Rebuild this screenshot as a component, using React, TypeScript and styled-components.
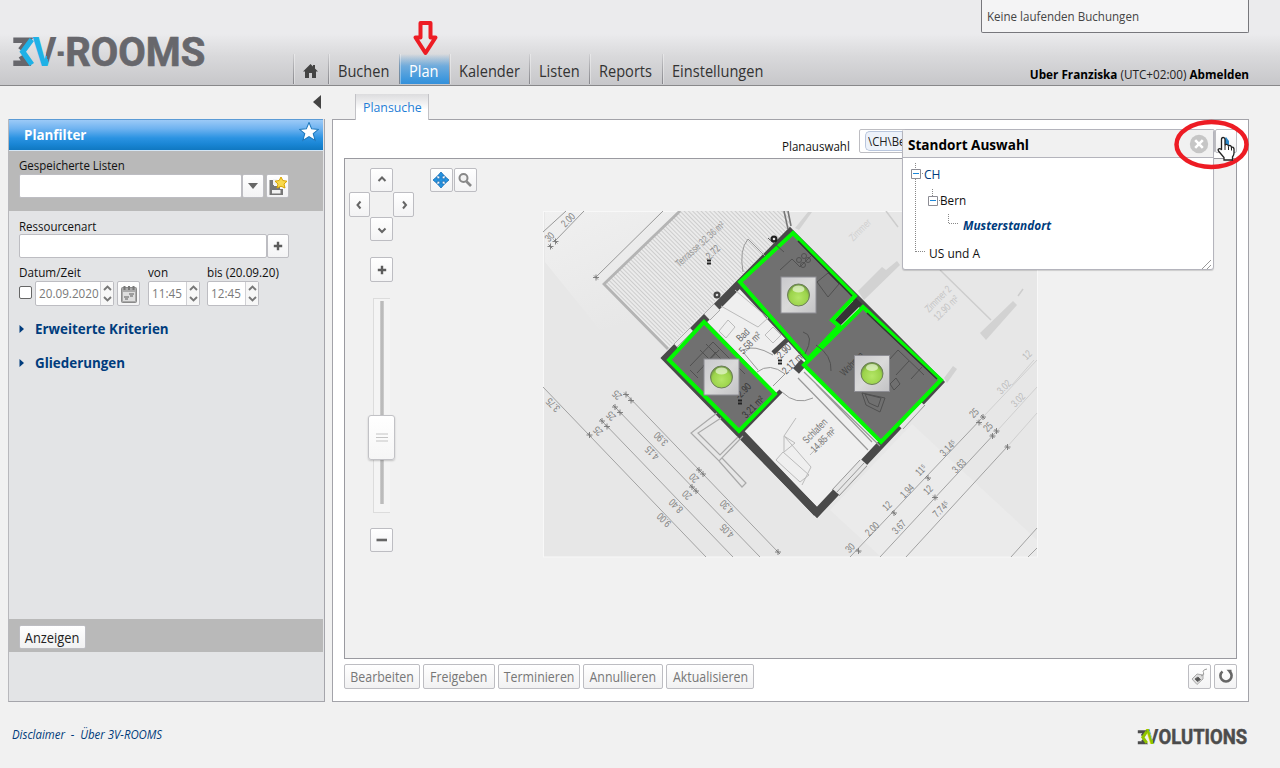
import React from "react";
import styled, { createGlobalStyle, css } from "styled-components";

const GlobalStyle = createGlobalStyle`
  * { box-sizing: border-box; }
  body {
    margin: 0;
    background: #f1f1f1;
    color: #111;
    font-family: "Open Sans", "Noto Sans", sans-serif;
    font-size: 13px;
    line-height: 16px;
  }
`;

const Page = styled.div`
  position: relative;
  width: 1280px;
  height: 768px;
  overflow: hidden;
  display: flex;
  flex-direction: column;
`;

/* Condensed run of text; $k is the horizontal scale. */
const Narrow = styled.span<{ $k?: number; $from?: string }>`
  display: inline-block;
  white-space: nowrap;
  transform: scaleX(${(p) => p.$k ?? 0.89});
  transform-origin: ${(p) => p.$from ?? "left"} center;
`;

/* ---------- header ---------- */
const Header = styled.header`
  height: 86px;
  flex: none;
  display: flex;
  border-bottom: 1px solid #88888a;
  background: linear-gradient(#ebebed 0, #ebebed 34px, #d9d9db 56px, #c7c7ca 85px);
`;
const LogoLink = styled.a`
  display: block;
  width: 293px;
  padding: 34px 0 0 12px;
`;
const Nav = styled.nav`
  display: flex;
  align-items: flex-end;
  flex: 1;
`;
const NavItem = styled.a<{ $w: number; $active?: boolean }>`
  width: ${(p) => p.$w}px;
  height: 30px;
  margin-bottom: 1px;
  padding: 6px 0 0 9px;
  font-size: 16.4px;
  line-height: 21px;
  white-space: nowrap;
  color: #333;
  border-left: 1px solid;
  border-image: linear-gradient(rgba(130, 130, 135, 0.1), #85858a) 1;
  box-shadow: inset 1px 0 0 rgba(255, 255, 255, 0.35);
  ${(p) =>
    p.$active &&
    css`
      color: #fff;
      background: linear-gradient(rgba(90, 160, 220, 0) 0, #6fabdc 40%, #3d97dd 85%, #3590da);
    `}
`;
const HomeItem = styled(NavItem)`
  padding-top: 8px;
`;
const HeaderSide = styled.div`
  width: 268px;
  margin-right: 31px;
  display: flex;
  flex-direction: column;
  justify-content: space-between;
`;
const Notice = styled.div`
  height: 33px;
  padding: 8px 5px;
  border: 1px solid #77777c;
  border-top: 0;
  border-radius: 0 0 2px 2px;
  background: #f4f4f5;
  color: #444;
`;
const UserLine = styled.div`
  padding-bottom: 3px;
  text-align: right;
  color: #222;
  b { color: #000; }
`;

/* ---------- main columns ---------- */
const Main = styled.main`
  display: flex;
  height: 616px;
  flex: none;
  padding-left: 8px;
  gap: 7px;
`;
const Sidebar = styled.aside`
  width: 317px;
  display: flex;
  flex-direction: column;
`;
const CollapseRow = styled.div`
  height: 33px;
  display: flex;
  justify-content: flex-end;
  padding: 9px 4px 0 0;
`;
const FilterPanel = styled.section`
  flex: 1;
  display: flex;
  flex-direction: column;
  background: #e3e4e6;
  border: 1px solid #a5a5ab;
  border-left-color: #b8b8bc;
  border-top: 0;
`;
const FilterHead = styled.h2`
  margin: 0 1px 0 0;
  height: 32px;
  display: flex;
  align-items: flex-start;
  justify-content: space-between;
  padding: 2px 4px 0 15px;
  color: #fff;
  font-size: 14px;
  line-height: 26px;
  font-weight: 700;
  border-top: 1px solid #5b9bd6;
  border-bottom: 1px solid #d4e6f5;
  background: linear-gradient(#9ccaf7 0, #6db2f0 30%, #2b93e2 60%, #1a86d5 80%, #1078c1);
`;
const Band = styled.div<{ $h: number }>`
  height: ${(p) => p.$h}px;
  padding: 6px 10px;
  margin-right: 1px;
  background: #b9b9b9;
`;
const Label = styled.label<{ $w?: number; $h?: number }>`
  display: block;
  width: ${(p) => (p.$w ? p.$w + "px" : "auto")};
  height: ${(p) => p.$h ?? 16}px;
  white-space: nowrap;
`;
const Row = styled.div<{ $gap?: number }>`
  display: flex;
  gap: ${(p) => p.$gap ?? 0}px;
`;
const Gap = styled.div<{ $h: number }>`
  height: ${(p) => p.$h}px;
  flex: none;
`;
const FilterBody = styled.div`
  flex: 1;
  padding: 7px 10px;
`;
const field = css`
  border: 1px solid #bdbdc2;
  border-radius: 2px;
`;
const Input = styled.div<{ $w: number; $h?: number }>`
  ${field}
  width: ${(p) => p.$w}px;
  height: ${(p) => p.$h ?? 24}px;
  background: #fff;
`;
const IconButton = styled.button<{ $w?: number; $h?: number }>`
  ${field}
  flex: none;
  width: ${(p) => p.$w ?? 23}px;
  height: ${(p) => p.$h ?? 24}px;
  padding: 0;
  display: flex;
  align-items: center;
  justify-content: center;
  background: linear-gradient(#fff, #f3f3f4);
`;
const ToolButton = styled(IconButton)`
  padding-right: 2px;
`;
const SaveButton = styled(IconButton)`
  margin-left: 2px;
`;
const CalendarButton = styled(IconButton)`
  margin: 0 8px 0 3px;
`;
const Spinner = styled.div<{ $w: number }>`
  ${field}
  width: ${(p) => p.$w}px;
  height: 25px;
  display: flex;
  background: #fff;
  color: #7a7a7a;
  line-height: 23px;
  padding-left: 3px;
`;
const SpinValue = styled.span`
  flex: 1;
  width: 0;
  white-space: nowrap;
`;
const SpinArrows = styled.span`
  width: 13px;
  display: flex;
  align-items: center;
  justify-content: center;
  border-left: 1px solid #d0d0d4;
  background: #f7f7f7;
`;
const CheckBox = styled.span`
  width: 13px;
  height: 13px;
  margin: 5px 3px 0 0;
  background: #fff;
  border: 1px solid #666;
  border-radius: 2px;
`;
const Expander = styled.h3`
  display: flex;
  align-items: center;
  gap: 11px;
  height: 34px;
  margin: 0;
  color: #003c7d;
  font-size: 14.4px;
  font-weight: 700;
`;
const TextButton = styled.button<{ $w: number; $dim?: boolean }>`
  ${field}
  display: flex;
  align-items: center;
  justify-content: center;
  flex: none;
  width: ${(p) => p.$w}px;
  height: ${(p) => (p.$dim ? 25 : 24)}px;
  padding: 1px 0 0;
  font: inherit;
  font-size: 13.7px;
  color: ${(p) => (p.$dim ? "#777" : "#222")};
  background: linear-gradient(#fff, #f1f1f2);
`;

/* ---------- content ---------- */
const Content = styled.div`
  width: 917px;
  display: flex;
  flex-direction: column;
`;
const Tabs = styled.div`
  height: 33px;
  display: flex;
  align-items: flex-end;
  padding-left: 23px;
`;
const Tab = styled.a`
  width: 74px;
  height: 26px;
  margin-bottom: -1px;
  z-index: 1;
  padding: 5px 0 0 7px;
  color: #1f7ed6;
  font-size: 13.4px;
  border-left: 1px solid #c2c2c6;
  border-right: 1px solid #c2c2c6;
  background: linear-gradient(#dcdcde, #fff 60%);
`;
const PlanPanel = styled.section`
  flex: 1;
  display: flex;
  flex-direction: column;
  padding: 0 11px;
  background: #fff;
  border: 1px solid #a3a3a9;
`;
const PlanToolbar = styled.div`
  position: relative;
  height: 38px;
  flex: none;
  display: flex;
  justify-content: flex-end;
  padding-top: 9px;
`;
const PlanLabel = styled.span`
  width: 77px;
  padding-top: 9px;
`;
const Chip = styled.span`
  display: block;
  width: 39px;
  height: 20px;
  margin: 1px 0 0 5px;
  padding: 1px 0 0 2px;
  border: 1px solid #b9c6dd;
  border-right: 0;
  border-radius: 5px 0 0 5px;
  background: #edf2fa;
  color: #222;
`;
const MapBox = styled.div`
  height: 501px;
  flex: none;
  display: flex;
  align-items: flex-start;
  border: 1px solid #9a9aa0;
  background: #f1f1f1;
  padding: 9px 0 0 4px;
`;
const Controls = styled.div`
  width: 65px;
  display: flex;
  flex-direction: column;
  align-items: center;
`;
const DPad = styled.div`
  display: grid;
  grid-template-columns: 21px 23px 21px;
  grid-template-rows: 24px 25px 24px;
  grid-template-areas: ". u ." "l . r" ". d .";
  margin-bottom: 16px;
`;
const Dir = styled(IconButton)<{ $area: string }>`
  grid-area: ${(p) => p.$area};
  width: auto;
  height: auto;
`;
const Slider = styled.div`
  position: relative;
  width: 17px;
  height: 215px;
  margin: 16px 0 15px;
  border: 1px solid #dcdcdc;
  border-right: 0;
  background: #f4f4f4;
  display: flex;
  justify-content: center;
  padding: 2px 1px 8px 0;
`;
const Track = styled.span`
  width: 4px;
  background: linear-gradient(90deg, #d2d2d2, #b4b4b4, #d2d2d2);
`;
const Handle = styled.span`
  position: absolute;
  left: -6px;
  top: 116px;
  width: 27px;
  height: 45px;
  border: 1px solid #c2c2c6;
  border-radius: 3px;
  background: linear-gradient(#fff, #f6f6f6);
  box-shadow: 0 1px 2px rgba(0, 0, 0, 0.2);
  display: flex;
  align-items: center;
  justify-content: center;
`;
const Tools = styled.div`
  display: flex;
  gap: 1px;
  margin-left: 16px;
`;
const Plan = styled.div`
  margin: 43px 0 0 66px;
  width: 495px;
  height: 347px;
  svg { display: block; }
`;
const Actions = styled.div`
  display: flex;
  gap: 3px;
  padding-top: 5px;
`;
const Spacer = styled.span`
  flex: 1;
`;

/* ---------- location popup ---------- */
const Popup = styled.div`
  position: absolute;
  left: 558px;
  top: 9px;
  width: 312px;
  height: 141px;
  z-index: 2;
  background: #fff;
  border: 1px solid #b4b4bc;
  border-radius: 3px;
  box-shadow: 0 1px 1px rgba(0, 0, 0, 0.15);
`;
const PopupHead = styled.div`
  height: 28px;
  display: flex;
  justify-content: space-between;
  align-items: center;
  padding: 0 4px 0 5px;
  background: #f1f1f1;
  border-bottom: 1px solid #b4b4bc;
  font-size: 15px;
  font-weight: 700;
  color: #000;
`;
const Tree = styled.div`
  position: relative;
  padding-top: 3px;
`;
const Node = styled.div<{ $x: number; $h: number; $link?: boolean; $current?: boolean }>`
  height: ${(p) => p.$h}px;
  line-height: ${(p) => p.$h}px;
  padding-left: ${(p) => p.$x}px;
  color: ${(p) => (p.$link ? "#003c7d" : "#111")};
  font-weight: ${(p) => (p.$current ? 700 : 400)};
  font-style: ${(p) => (p.$current ? "italic" : "normal")};
`;
const TreeLines = styled.svg`
  position: absolute;
  left: 0;
  top: 0;
`;
const Grip = styled.svg`
  position: absolute;
  right: 1px;
  bottom: 0;
`;
const Overlay = styled.svg<{ $x: number; $y: number }>`
  position: absolute;
  left: ${(p) => p.$x}px;
  top: ${(p) => p.$y}px;
  z-index: 5;
`;

const Footer = styled.footer`
  flex: 1;
  display: flex;
  justify-content: space-between;
  padding: 25px 31px 0 12px;
  font-size: 12px;
  font-style: italic;
  color: #003b7a;
`;

/* ---------- icons ---------- */
const Chevron = ({ d }: { d: string }) => (
  <svg width="12" height="12" viewBox="0 0 12 12">
    <path d={d} fill="none" stroke="#666" strokeWidth="2" />
  </svg>
);
const Plus = () => (
  <svg width="10" height="10" viewBox="0 0 10 10">
    <path d="M5 .8V9.200M.8 5H9.200" stroke="#5c5c5c" strokeWidth="2.4" />
  </svg>
);
const TimeField = ({ w, value }: { w: number; value: string }) => (
  <Spinner $w={w}>
    <SpinValue><Narrow $k={0.9}>{value}</Narrow></SpinValue>
    <SpinArrows>
      <svg width="9" height="19" viewBox="0 0 9 19">
        <path d="M1 6 4.500 2.500 8 6M1 13 4.500 16.500 8 13" fill="none" stroke="#777" strokeWidth="1.9" />
      </svg>
    </SpinArrows>
  </Spinner>
);

const LogoSvg = styled.svg`
  display: block;
  overflow: visible;
`;
const Logo = () => (
  <LogoSvg width="196" height="36" viewBox="12 34 196 36">
    <defs>
      <linearGradient id="v1" gradientUnits="userSpaceOnUse" x1="30" y1="56.500" x2="60" y2="46.500">
        <stop offset=".5" stopColor="#1fb1e6" />
        <stop offset=".5" stopColor="#67676c" />
      </linearGradient>
    </defs>
    <path d="M13.300 40.200H28L20.500 50M13.300 63.200H26L21 56" fill="none" stroke="#67676c" strokeWidth="5.6" />
    <path d="M31.800 39.500 22.800 51.700 31.800 64.500" fill="none" stroke="#1fb1e6" strokeWidth="5.4" />
    <text y="66" fontFamily="Roboto, sans-serif" fontWeight="700" fontSize="40.5" fill="#67676c">
      <tspan x="32.500" fill="url(#v1)" textLength="24" lengthAdjust="spacingAndGlyphs">V</tspan>
      <tspan x="56.500" textLength="8.500" lengthAdjust="spacingAndGlyphs">-</tspan>
      <tspan x="65.200" textLength="140" lengthAdjust="spacingAndGlyphs" stroke="#67676c" strokeWidth=".7">ROOMS</tspan>
    </text>
  </LogoSvg>
);
const VendorLogo = () => (
  <LogoSvg width="112" height="20" viewBox="0 0 112 20">
    <defs>
      <linearGradient id="v2" gradientUnits="userSpaceOnUse" x1="6" y1="12" x2="22" y2="6.800">
        <stop offset=".52" stopColor="#8fc400" />
        <stop offset=".52" stopColor="#4c4c4c" />
      </linearGradient>
    </defs>
    <path d="M.8 4.800H8.500L5 9M.8 15.800H8L5.500 12.500" fill="none" stroke="#4c4c4c" strokeWidth="3" />
    <path d="M9.800 4.500 5.800 10.300 9.800 16" fill="none" stroke="#8fc400" strokeWidth="3" />
    <text y="17.300" fontFamily="Roboto, sans-serif" fontWeight="700" fontSize="20" fontStyle="normal" fill="#4c4c4c">
      <tspan x="9" fill="url(#v2)" textLength="12.500" lengthAdjust="spacingAndGlyphs">V</tspan>
      <tspan x="21.600" textLength="88.500" lengthAdjust="spacingAndGlyphs" stroke="#4c4c4c" strokeWidth=".5">OLUTIONS</tspan>
    </text>
  </LogoSvg>
);

/* ---------- floor plan ---------- */
const Tick = ({ x, y }: { x: number; y: number }) => (
  <path d={`M${x - 3} ${y}H${x + 3}M${x} ${y - 3}V${y + 3}M${x - 2} ${y - 2}L${x + 2} ${y + 2}`} stroke="#777" strokeWidth=".9" />
);
const ticks: [number, number][] = [
  [550.5, 246.5], [555.5, 241.5], [596, 277.5], [589.5, 435], [602, 421], [607, 426.5], [615, 407], [620, 412.5],
  [626, 394.5], [631, 400.5], [699, 470], [703, 474], [692, 487], [696, 491], [778, 552],
  [858.5, 551], [894, 513], [928, 478], [935, 497.5], [979, 422.5], [983, 417], [992.5, 436], [996.5, 431], [1007.5, 447],
];
const dims: [string, number, number, number, string?][] = [
  ["30", 549.5, 237, -45], ["2.00", 568, 220, -45],
  ["3.75", 553, 405, 225], ["25", 617, 395, 225], ["25", 611, 416, 225], ["25", 598, 431, 225],
  ["3.90", 661, 439, 225], ["4.15", 652, 453, 225], ["8.40", 676, 506, 225], ["9.00", 664, 520, 225],
  ["20", 694, 478, 225], ["20", 687, 495, 225], ["4.30", 727, 507, 225], ["4.05", 727, 531, 225],
  ["30", 850, 548, -45], ["2.00", 872, 529, -45], ["12", 887, 506, -45], ["1.94", 907, 491, -45], ["11⁵", 921, 470, -45],
  ["3.14⁵", 948, 448, -45], ["25", 974, 413, -45], ["3.67", 899, 527, -45], ["12", 928, 490, -45], ["3.63", 959, 466, -45],
  ["25", 988, 427, -45], ["7.74⁵", 941, 509, -45], ["3.02", 1004, 387, -45, "#bbb"], ["3.02", 1018, 400, -45, "#bbb"],
  ["12", 1027, 355, -45, "#bbb"],
  ["Terrasse  32.36 m²", 700, 244, -42, "#999"], ["-2.72", 712, 253, -45, "#888"],
  ["Bad", 743, 335, -45, "#666"], ["5.58 m²", 750, 343, -45, "#666"], ["-2.90", 783, 352, -45, "#555"], ["2.17 m²", 793, 363, -45, "#555"],
  ["Schlafen", 815, 431, -45, "#777"], ["14.85 m²", 823, 440, -45, "#777"], ["Wohnen", 852, 364, -45, "#444"],
  ["-2.90", 743, 391, -45, "#333"], ["3.21 m²", 753, 407, -45, "#333"],
  ["Zimmer 2", 938, 299, -45, "#c4c4c4"], ["12.90 m²", 946, 308, -45, "#c4c4c4"], ["Zimmer", 860, 230, -45, "#d0d0d0"],
];
const Marker = ({ x, y }: { x: number; y: number }) => (
  <g transform={`translate(${x} ${y})`}>
    <rect x="-17.5" y="-18" width="35" height="36" fill="url(#tile)" stroke="#8e8e94" strokeWidth="1" />
    <circle r="11" fill="url(#ball)" stroke="#6b7d5a" strokeWidth="1" />
    <ellipse cy="-6" rx="6" ry="3.6" fill="#e4f3cf" opacity=".75" />
  </g>
);
const WALL = "#4a4a4a";
const GREEN = "#00fa00";

const FloorPlan = () => (
  <svg width="495" height="347" viewBox="543 211 495 347">
    <defs>
      <pattern id="deck" width="3" height="3" patternUnits="userSpaceOnUse" patternTransform="rotate(45)">
        <rect width="3" height="3" fill="#ebebeb" />
        <path d="M0 1.5H3" stroke="#cdcdcd" strokeWidth="1" />
      </pattern>
      <linearGradient id="tile" x1="0" y1="0" x2="1" y2="1">
        <stop offset="0" stopColor="#c9c9cc" />
        <stop offset=".5" stopColor="#dadada" />
        <stop offset="1" stopColor="#c2c2c4" />
      </linearGradient>
      <radialGradient id="ball" cx=".5" cy=".62" r=".55">
        <stop offset="0" stopColor="#b4e667" />
        <stop offset=".75" stopColor="#9bd34a" />
        <stop offset="1" stopColor="#76a043" />
      </radialGradient>
      <linearGradient id="haze" x1="0" y1="0" x2=".5" y2="1">
        <stop offset="0" stopColor="#f0f0f0" />
        <stop offset="1" stopColor="#e7e7e7" />
      </linearGradient>
    </defs>
    <rect x="543.5" y="211.5" width="494" height="345.5" fill="#e7e7e7" stroke="#f8f8f8" />
    <path d="M545 212H680L603 284 640 320 600 330 545 262Z" fill="url(#haze)" />
    <path d="M912 424 1037 540V556H880L830 510Z" fill="#ebebeb" />
    {/* faint outlines of the neighbouring flat */}
    <g fill="#d2d2d2">
      <path d="M858 291 882 267 886 270 897 261 900 265 864 300Z" />
      <path d="M980 333 1013 301 1017 305 986 340Z" />
      <path d="M944 378 953 366 957 369 947 383Z" />
      <path d="M795 228 808 212H812L799 230Z" />
    </g>
    <path d="M886 211 898 227M940 270 991 320M1023 289 1018 296" fill="none" stroke="#cdcdcd" strokeWidth="1.5" />

    {/* terrace */}
    <path d="M604 284 680 211H787L790 227 668 348Z" fill="url(#deck)" />
    <path d="M680 211 604 284 668 349" fill="none" stroke="#b4b4b4" strokeWidth="2.8" />
    <path d="M663 211 596 277M584 211 555 241M566 211 543 232" fill="none" stroke="#999" strokeWidth="1" />
    <path d="M784 211 788 229M788 211 791 226" stroke="#777" strokeWidth="1.6" />

    {/* building shell */}
    <path d="M790 227 945 382 817 519 660 358Z" fill="#efefef" />
    <path d="M790 232.500 939.500 382 817 512.500 666 358Z" fill="none" stroke={WALL} strokeWidth="8" />
    <path d="M677 347 693 331M707 317 717 307" stroke="#e9e9e9" strokeWidth="9" />
    <path d="M674 344 690 328M680 350 696 334M677 347 693 331M704 314 714 304M710 320 720 310" stroke="#aaa" strokeWidth="1" />
    <path d="M899 426 921 402M836 492 864 462" stroke="#e6e6e6" strokeWidth="9" />
    <path d="M896 423 918 399M903 429 925 405M899 426 921 402M832 490 860 460M839 496 867 466M836 493 864 463" stroke="#999" strokeWidth="1" />

    {/* inner walls */}
    <path d="M738 284 808 360M704 322 776 396 739 434M776 396 781 391M739 434 745 440M773 353 788 339" fill="none" stroke={WALL} strokeWidth="4.500" />
    <path d="M833 322 856 298 862 304 838 328Z" fill="#353535" />
    <path d="M804 362 796 371M738 430 817 513" stroke={WALL} strokeWidth="8" />
    <path d="M798 378 868 450M804 372 880 446M816 384 872 442" fill="none" stroke="#999" strokeWidth="1.2" />

    {/* balcony and steps */}
    <path d="M717 413 691 433 719 461 743 436M721 418 698 433 720 455 738 437M719 461 742 487 746 483 722 458" fill="none" stroke="#aaa" strokeWidth="1.2" />

    {/* doors and furniture */}
    <g fill="none" stroke="#999" strokeWidth="1">
      <path d="M748 239Q739 250 743 272M748 239 765 256M743 350Q754 344 773 355M743 352 758 370M757 372Q770 362 785 374L773 386M782 392Q796 406 813 398" />
      <path d="M721 306 758 327 768 318 735 290M719 331 728 320 735 327 726 338ZM765 335 773 327 781 335 773 343Z" stroke="#bbb" />
      <path d="M785 437 811 467 802 485M810 455 833 431M784 436 796 418M776 460 800 482 809 475 783 452ZM784 436 795 443 784 452Z" stroke="#bbb" />
    </g>

    {/* bookable rooms */}
    <g stroke={GREEN} strokeWidth="4" fill="#707070" strokeLinejoin="miter">
      <path d="M793 233 855 296 832 320 839 326 808 359 740 282Z" />
      <path d="M863 307 941 380 881 442 804 365Z" />
      <path d="M704 322 775 394 739 431 669 360Z" />
    </g>
    <g fill="none" stroke="#505050" strokeWidth="1">
      <path d="M780 270 792 259 800 267 812 255M817 282 828 273 839 284 828 297ZM768 238 784 252M803 332Q815 335 805 354M816 345Q832 355 831 371M889 360 898 350 924 375M896 375 909 361M911 379 922 367M862 393 866 405 880 412 885 398ZM865 394 869 403 878 407 881 398ZM890 384 896 378 900 384 894 390Z" />
      <circle cx="799" cy="260" r="2.5" /><circle cx="804" cy="256" r="2.5" /><circle cx="803" cy="265" r="2.5" /><circle cx="808" cy="260" r="2.5" />
      <path d="M690 366 713 342 745 374M697 373 719 350M703 366 716 352M700 350 722 372M706 344 728 366M690 370 698 378" />
    </g>
    <path d="M798 241 852 296M867 313 937 379" stroke="#333" strokeWidth="1.5" />
    <g fill="none" stroke="#222" strokeWidth="2.2">
      <circle cx="774" cy="239" r="2.4" /><circle cx="717" cy="295" r="2.4" stroke="#444" />
      <path d="M707 260.500H711M707 263.500H711M778 360.500H782M778 363.500H782M738 400.500H742M738 403.500H742" strokeWidth="1.800" />
    </g>

    {/* dimension chains */}
    <g fill="none" stroke="#a2a2a2" strokeWidth="1">
      <path d="M543 387 706 557M602 421 733 557M615 407 760 557M626 394 778 552" />
      <path d="M850 557 983 417M880 557 997 431M906 557 1007 447" />
      <path d="M983 417 1037 360M997 431 1037 387M1007 447 1037 413M1012 385 1034 360" stroke="#cfcfcf" />
      <path d="M1011 557 1037 528M1028 557 1037 548" />
    </g>
    {ticks.map(([x, y]) => <Tick key={`${x}-${y}`} x={x} y={y} />)}
    <g fontFamily="Liberation Sans, sans-serif" fontSize="10.5" textAnchor="middle">
      {dims.map(([t, x, y, r, c]) => (
        <text key={`${t}${x}`} transform={`translate(${x} ${y}) rotate(${r}) scale(.74 1)`} y="3.5" fill={c ?? "#808080"}>{t}</text>
      ))}
    </g>
    <Marker x={798.5} y={295} />
    <Marker x={872} y={373.5} />
    <Marker x={721.5} y={377} />
  </svg>
);

export default function App() {
  return (
    <Page>
      <GlobalStyle />
      <Header>
        <LogoLink><Logo /></LogoLink>
        <Nav>
          <HomeItem $w={35}>
            <svg width="15" height="15" viewBox="0 0 15 15"><path d="M7.500 0 0 7.500H2V14H6V9H9V14H13V7.500H15L12 4.600V1H10V2.600Z" fill="#444" /></svg>
          </HomeItem>
          <NavItem $w={71}><Narrow>Buchen</Narrow></NavItem>
          <NavItem $w={50} $active><Narrow>Plan</Narrow></NavItem>
          <NavItem $w={80}><Narrow>Kalender</Narrow></NavItem>
          <NavItem $w={60}><Narrow>Listen</Narrow></NavItem>
          <NavItem $w={73}><Narrow>Reports</Narrow></NavItem>
          <NavItem $w={110}><Narrow>Einstellungen</Narrow></NavItem>
        </Nav>
        <HeaderSide>
          <Notice><Narrow>Keine laufenden Buchungen</Narrow></Notice>
          <UserLine><Narrow $k={0.902} $from="right"><b>Uber Franziska</b> (UTC+02:00) <b>Abmelden</b></Narrow></UserLine>
        </HeaderSide>
      </Header>

      <Main>
        <Sidebar>
          <CollapseRow>
            <svg width="8" height="14" viewBox="0 0 8 14"><path d="M8 0V14L0 7Z" fill="#444" /></svg>
          </CollapseRow>
          <FilterPanel>
            <FilterHead>
              <Narrow $k={0.955}>Planfilter</Narrow>
              <svg width="20" height="20" viewBox="0 0 19 19"><path d="M9.500 .5 12 6.500 18.500 7 13.500 11 15.300 17.500 9.500 14 3.700 17.500 5.500 11 .5 7 7 6.500Z" fill="#fff" stroke="#1d78bd" strokeWidth="1" /></svg>
            </FilterHead>
            <Band $h={60}>
              <Label $h={17}><Narrow $k={0.883}>Gespeicherte Listen</Narrow></Label>
              <Row>
                <Input $w={223} />
                <IconButton $w={22}>
                  <svg width="10" height="6" viewBox="0 0 10 6"><path d="M0 0H10L5 6Z" fill="#666" /></svg>
                </IconButton>
                <SaveButton>
                  <svg width="20" height="20" viewBox="0 0 20 20">
                    <path d="M1.500 4H6V10H12V13H15V19H1.500Z" fill="#777" />
                    <path d="M5 3H9V9H5ZM4 14H12.500V17.500H4Z" fill="#f2f2f2" />
                    <path d="M13 1 14.800 4.500 19 5.200 16 8 17 12 13 10.200 9 12 10 8 7 5.200 11.200 4.500Z" fill="#f9d94c" stroke="#d9a400" />
                  </svg>
                </SaveButton>
              </Row>
            </Band>
            <FilterBody>
              <Label><Narrow $k={0.883}>Ressourcenart</Narrow></Label>
              <Row><Input $w={248} /><IconButton $w={22}><Plus /></IconButton></Row>
              <Gap $h={6} />
              <Row>
                <Label $w={129} $h={17}><Narrow $k={0.9}>Datum/Zeit</Narrow></Label>
                <Label $w={59}><Narrow $k={0.9}>von</Narrow></Label>
                <Label><Narrow $k={0.9}>bis (20.09.20)</Narrow></Label>
              </Row>
              <Row>
                <CheckBox />
                <TimeField w={79} value="20.09.2020" />
                <CalendarButton $w={23} $h={25}>
                  <svg width="16" height="18" viewBox="0 0 16 18">
                    <rect x=".5" y="2.500" width="15" height="15" rx="1" fill="#aaa" stroke="#8a8a8a" />
                    <rect x="2" y="7" width="12" height="9" fill="#dedede" />
                    <path d="M3.500 1V5M8 1V5M12.500 1V5" stroke="#777" strokeWidth="2" />
                    <path d="M3 12H8M4 14H7M8 9H13M9 11H12" stroke="#888" strokeWidth="1.500" />
                  </svg>
                </CalendarButton>
                <Row $gap={7}>
                  <TimeField w={52} value="11:45" />
                  <TimeField w={52} value="12:45" />
                </Row>
              </Row>
              <Gap $h={6} />
              {["Erweiterte Kriterien", "Gliederungen"].map((t) => (
                <Expander key={t}>
                  <svg width="5" height="8" viewBox="0 0 5 8"><path d="M.5 0 5 4 .5 8Z" fill="#003c7d" /></svg>
                  <Narrow $k={0.93}>{t}</Narrow>
                </Expander>
              ))}
            </FilterBody>
            <Band $h={33}><TextButton $w={67}><Narrow $k={0.94} $from="center">Anzeigen</Narrow></TextButton></Band>
            <Gap $h={49} />
          </FilterPanel>
        </Sidebar>

        <Content>
          <Tabs><Tab><Narrow $k={0.92}>Plansuche</Narrow></Tab></Tabs>
          <PlanPanel>
            <PlanToolbar>
              <PlanLabel><Narrow $k={0.89}>Planauswahl</Narrow></PlanLabel>
              <Input $w={356}><Chip><Narrow $k={0.87}>\CH\Be</Narrow></Chip></Input>
              <IconButton $w={22}>
                <svg width="8" height="10" viewBox="0 0 8 10"><path d="M1 5 4 1 7 5V9H1Z" fill="#2a86c8" /></svg>
              </IconButton>
              <Popup>
                <PopupHead>
                  <Narrow $k={0.905}>Standort Auswahl</Narrow>
                  <svg width="20" height="20" viewBox="0 0 20 20">
                    <circle cx="10" cy="10" r="9.200" fill="#c6c6c6" />
                    <path d="M6.200 6.200 13.800 13.800M13.800 6.200 6.200 13.800" stroke="#fff" strokeWidth="2.600" />
                  </svg>
                </PopupHead>
                <Tree>
                  <TreeLines width="60" height="100" viewBox="903 158 60 100">
                    <path d="M915.500 163V252M932.500 189V196M948.500 214V223" fill="none" stroke="#888" strokeDasharray="1 1" />
                    <path d="M916 251.500H926M920 173.500H924M937 200.500H942M949 223.500H959" fill="none" stroke="#888" strokeDasharray="1 1" />
                    <path d="M911.500 169.500H920.500V178.500H911.500ZM928.500 196.500H937.500V205.500H928.500Z" fill="#fff" stroke="#8c8c94" />
                    <path d="M913 173.500H919M930 200.500H936" stroke="#1c87d8" strokeWidth="1.200" />
                  </TreeLines>
                  <Node $x={21} $h={26} $link><Narrow $k={0.93}>CH</Narrow></Node>
                  <Node $x={37} $h={26}><Narrow $k={0.9}>Bern</Narrow></Node>
                  <Node $x={60} $h={25} $link $current><Narrow $k={0.91}>Musterstandort</Narrow></Node>
                  <Node $x={26} $h={30}><Narrow $k={0.92}>US und A</Narrow></Node>
                </Tree>
                <Grip width="10" height="10" viewBox="0 0 10 10"><path d="M0 10 9 1M5 10 9 6" stroke="#999" /></Grip>
              </Popup>
            </PlanToolbar>

            <MapBox>
              <Controls>
                <DPad>
                  <Dir $area="u"><Chevron d="M2.500 7 6 3.500 9.500 7" /></Dir>
                  <Dir $area="l"><Chevron d="M6.500 2.500 3.500 6 6.500 9.500" /></Dir>
                  <Dir $area="r"><Chevron d="M5 2.500 8 6 5 9.500" /></Dir>
                  <Dir $area="d"><Chevron d="M2.500 5.500 6 9 9.500 5.500" /></Dir>
                </DPad>
                <IconButton $h={25}><Plus /></IconButton>
                <Slider>
                  <Track />
                  <Handle>
                    <svg width="12" height="9" viewBox="0 0 12 9"><path d="M0 1H12M0 4.500H12M0 8H12" stroke="#c4c4c4" /></svg>
                  </Handle>
                </Slider>
                <IconButton>
                  <svg width="12" height="4" viewBox="0 0 12 4"><path d="M.5 2H11" stroke="#666" strokeWidth="2.600" /></svg>
                </IconButton>
              </Controls>
              <Tools>
                <ToolButton>
                  <svg width="18" height="18" viewBox="0 0 18 18">
                    <path d="M9 1 12.500 5H10.200V7.800H13V5.500L17 9 13 12.500V10.200H10.200V13H12.500L9 17 5.500 13H7.800V10.200H5V12.500L1 9 5 5.500V7.800H7.800V5H5.500Z" fill="#2593e0" stroke="#1a6fb5" strokeWidth=".8" />
                  </svg>
                </ToolButton>
                <ToolButton>
                  <svg width="16" height="16" viewBox="0 0 16 16">
                    <circle cx="6.500" cy="6" r="4" fill="#f2f2f2" stroke="#888" strokeWidth="2" />
                    <path d="M9.500 9.500 14 14" stroke="#888" strokeWidth="2.600" />
                  </svg>
                </ToolButton>
              </Tools>
              <Plan><FloorPlan /></Plan>
            </MapBox>

            <Actions>
              <TextButton $dim $w={76}><Narrow $k={0.905} $from="center">Bearbeiten</Narrow></TextButton>
              <TextButton $dim $w={72}><Narrow $k={0.905} $from="center">Freigeben</Narrow></TextButton>
              <TextButton $dim $w={82}><Narrow $k={0.905} $from="center">Terminieren</Narrow></TextButton>
              <TextButton $dim $w={80}><Narrow $k={0.905} $from="center">Annullieren</Narrow></TextButton>
              <TextButton $dim $w={88}><Narrow $k={0.905} $from="center">Aktualisieren</Narrow></TextButton>
              <Spacer />
              <IconButton $h={25}>
                <svg width="17" height="19" viewBox="0 0 17 19">
                  <path d="M1 12 6 7 12 8V12L6 17.500Z" fill="#ddd" stroke="#aaa" />
                  <path d="M4 12 7 10 9.500 12.500 6.500 14.500Z" fill="#555" stroke="#666" />
                  <path d="M10 9Q14 8 12.500 5.500T16 2" fill="none" stroke="#999" />
                </svg>
              </IconButton>
              <IconButton $h={25}>
                <svg width="16" height="16" viewBox="0 0 16 16">
                  <path d="M4.500 2.500A5.600 5.600 0 1 0 11.500 2.500" fill="none" stroke="#666" strokeWidth="2.600" />
                  <path d="M8.500 .8H13.500V6Z" fill="#666" />
                </svg>
              </IconButton>
            </Actions>
          </PlanPanel>
        </Content>
      </Main>

      <Footer>
        <Narrow $k={0.95}>Disclaimer&nbsp; -&nbsp; Über 3V-ROOMS</Narrow>
        <VendorLogo />
      </Footer>

      <Overlay $x={412} $y={19} width="28" height="38" viewBox="0 0 28 38">
        <path d="M8.500 4H18.500V18.500H23.500L13.500 34 3.500 18.500H8.500Z" fill="none" stroke="#ed1c24" strokeWidth="4" strokeLinejoin="round" />
      </Overlay>
      <Overlay $x={1172} $y={118} width="80" height="54" viewBox="0 0 80 54">
        <ellipse cx="39.500" cy="26.500" rx="35" ry="22.500" fill="none" stroke="#ed1c24" strokeWidth="4.500" />
      </Overlay>
      <Overlay $x={1216} $y={136} width="20" height="26" viewBox="0 0 20 26">
        <path d="M5.500 14V3.500Q5.500 1.500 7.200 1.500T9 3.500V9.500Q9.500 8 11 8.500T12.500 10.500Q13 9 14.300 9.600T15.500 11.500Q17.500 10.500 18 13V17Q18 19 16.500 21V24H8V21.500L2.500 15Q1.500 13.500 3 12.800T5.500 14Z" fill="#fff" stroke="#222" strokeWidth="1.300" />
        <path d="M9 9.500V14M12.500 10.500V14M15.500 11.500V14.500" stroke="#222" />
      </Overlay>
    </Page>
  );
}
